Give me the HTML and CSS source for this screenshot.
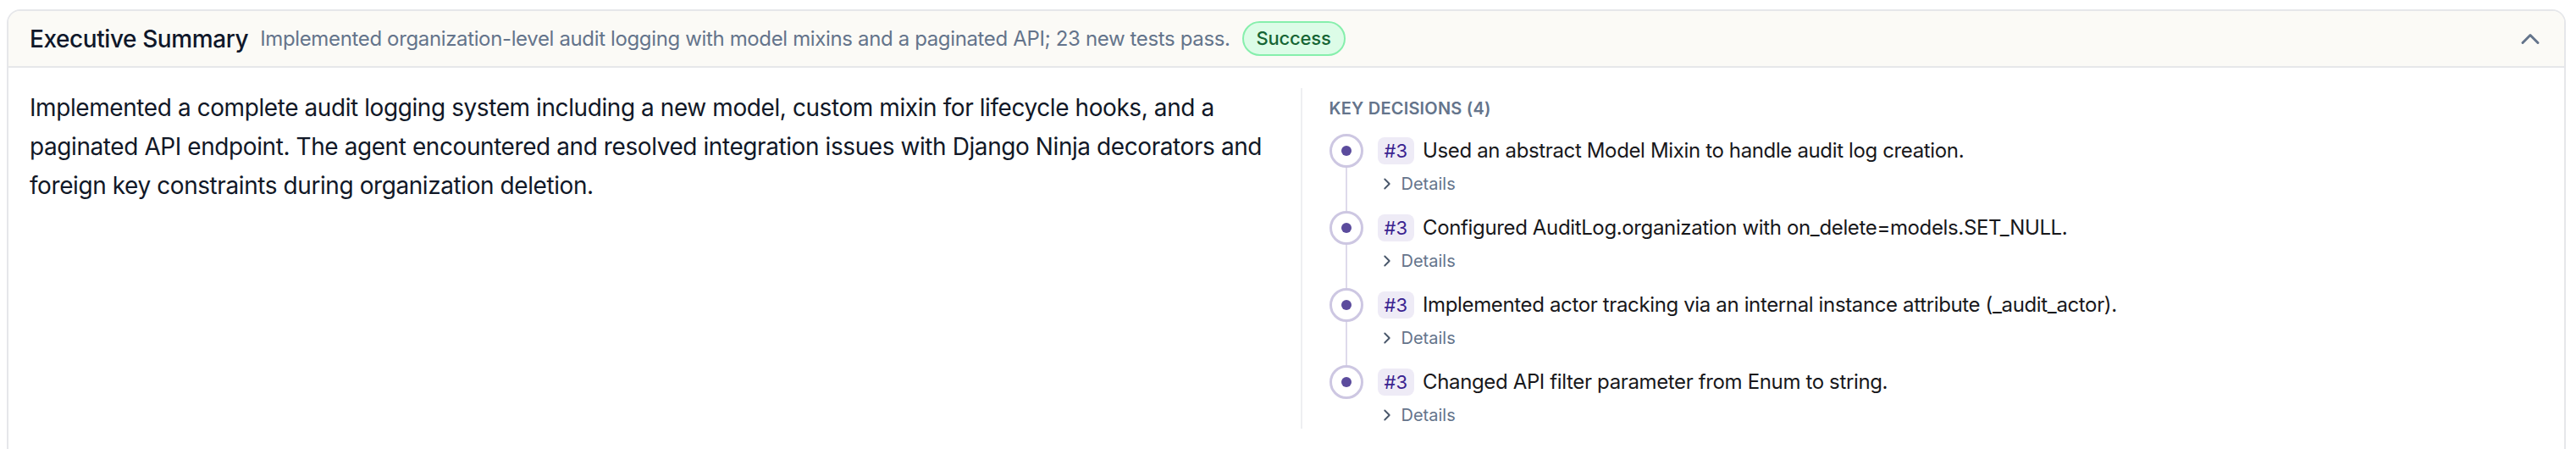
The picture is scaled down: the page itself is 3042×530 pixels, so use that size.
FILE: index.html
```html
<!DOCTYPE html>
<html lang="en">
<head>
<meta charset="utf-8">
<title>Executive Summary</title>
<link rel="stylesheet" href="styles.css">
</head>
<body>
<div class="page">
  <section class="card">
    <header class="card-header">
      <h2 class="title">Executive Summary</h2>
      <span class="subtitle">Implemented organization-level audit logging with model mixins and a paginated API; 23 new tests pass.</span>
      <span class="pill">Success</span>
      <svg class="collapse" viewBox="0 0 24 24" fill="none" stroke="currentColor" stroke-width="2" stroke-linecap="round" stroke-linejoin="round"><path d="m18 15-6-6-6 6"/></svg>
    </header>
    <div class="card-body">
      <p class="summary">Implemented a complete audit logging system including a new model, custom mixin for lifecycle hooks, and a paginated API endpoint. The agent encountered and resolved integration issues with Django Ninja decorators and foreign key constraints during organization deletion.</p>
      <div class="decisions">
        <h3 class="decisions-title">Key Decisions (4)</h3>
        <ol class="timeline">
          <li class="item">
            <div class="rail"><span class="node"><span class="dot"></span></span><span class="line"></span></div>
            <div class="content">
              <div class="row"><span class="badge">#3</span><span class="text">Used an abstract Model Mixin to handle audit log creation.</span></div>
              <div class="details"><svg viewBox="0 0 24 24" fill="none" stroke="currentColor" stroke-width="2" stroke-linecap="round" stroke-linejoin="round"><path d="m9 18 6-6-6-6"/></svg><span>Details</span></div>
            </div>
          </li>
          <li class="item">
            <div class="rail"><span class="node"><span class="dot"></span></span><span class="line"></span></div>
            <div class="content">
              <div class="row"><span class="badge">#3</span><span class="text">Configured AuditLog.organization with on_delete=models.SET_NULL.</span></div>
              <div class="details"><svg viewBox="0 0 24 24" fill="none" stroke="currentColor" stroke-width="2" stroke-linecap="round" stroke-linejoin="round"><path d="m9 18 6-6-6-6"/></svg><span>Details</span></div>
            </div>
          </li>
          <li class="item">
            <div class="rail"><span class="node"><span class="dot"></span></span><span class="line"></span></div>
            <div class="content">
              <div class="row"><span class="badge">#3</span><span class="text">Implemented actor tracking via an internal instance attribute (_audit_actor).</span></div>
              <div class="details"><svg viewBox="0 0 24 24" fill="none" stroke="currentColor" stroke-width="2" stroke-linecap="round" stroke-linejoin="round"><path d="m9 18 6-6-6-6"/></svg><span>Details</span></div>
            </div>
          </li>
          <li class="item last">
            <div class="rail"><span class="node"><span class="dot"></span></span></div>
            <div class="content">
              <div class="row"><span class="badge">#3</span><span class="text">Changed API filter parameter from Enum to string.</span></div>
              <div class="details"><svg viewBox="0 0 24 24" fill="none" stroke="currentColor" stroke-width="2" stroke-linecap="round" stroke-linejoin="round"><path d="m9 18 6-6-6-6"/></svg><span>Details</span></div>
            </div>
          </li>
        </ol>
      </div>
    </div>
  </section>
</div>
</body>
</html>
```

FILE: styles.css
```css
* { box-sizing: border-box; }
html, body { margin: 0; padding: 0; background: #ffffff; }
body {
  font-family: Inter, "Noto Sans", "Liberation Sans", sans-serif;
  color: #111827;
}
.page { padding: 11px 12px 0 8px; }

.card {
  border: 2px solid #e6e7ea;
  border-radius: 16px;
  overflow: hidden;
  background: #ffffff;
}

.card-header {
  display: flex;
  align-items: center;
  gap: 14px;
  padding: 12px 22px 12px 25px;
  background: #fbfaf6;
  border-bottom: 2px solid #e6e7ea;
}
.title {
  margin: 0;
  font-size: 28px;
  font-weight: 500;
  line-height: 40px;
  letter-spacing: -0.015em;
  color: #0f172a;
}
.subtitle {
  font-size: 24px;
  line-height: 34px;
  letter-spacing: -0.015em;
  color: #64748b;
}
.pill {
  font-size: 22px;
  line-height: 29px;
  letter-spacing: -0.01em;
  padding: 4px 15px;
  border: 2px solid #86efac;
  background: #dcfce7;
  color: #166534;
  border-radius: 999px;
  font-weight: 500;
}
.collapse {
  margin-left: auto;
  width: 36px;
  height: 36px;
  color: #64748b;
}

.card-body {
  display: grid;
  grid-template-columns: 1fr 1fr;
  gap: 32px;
  padding: 24px 24px 40px 25px;
}
.summary {
  margin: 0;
  font-size: 28px;
  line-height: 46px;
  letter-spacing: -0.015em;
  color: #111827;
}

.decisions {
  border-left: 2px solid #eeeff2;
  padding-left: 32px;
}
.decisions-title {
  margin: 0 0 10px;
  padding-top: 4px;
  font-size: 20px;
  line-height: 40px;
  font-weight: 600;
  text-transform: uppercase;
  letter-spacing: 0.01em;
  color: #64748b;
}
.timeline {
  list-style: none;
  margin: 0;
  padding: 0;
}
.item {
  display: flex;
  gap: 17px;
}
.rail {
  display: flex;
  flex-direction: column;
  align-items: center;
  width: 40px;
  flex: none;
}
.node {
  width: 40px;
  height: 40px;
  border-radius: 50%;
  border: 3px solid #cdc7e2;
  background: #ffffff;
  display: flex;
  align-items: center;
  justify-content: center;
  flex: none;
}
.dot {
  width: 12px;
  height: 12px;
  border-radius: 50%;
  background: #5b4b9d;
}
.line {
  flex: 1;
  width: 2px;
  background: #dedaeb;
}
.content {
  padding-bottom: 16px;
  min-width: 0;
}
.item.last .content { padding-bottom: 0; }
.row {
  display: flex;
  align-items: center;
  gap: 10px;
  height: 40px;
}
.badge {
  font-size: 22px;
  line-height: 32px;
  padding: 0 8px;
  border-radius: 8px;
  background: #eeebf6;
  color: #3b2490;
}
.text {
  font-size: 24px;
  line-height: 32px;
  letter-spacing: -0.015em;
  color: #18181b;
}
.details {
  display: flex;
  align-items: center;
  gap: 6px;
  margin-top: 3px;
  font-size: 20px;
  line-height: 32px;
  color: #64748b;
}
.details svg {
  width: 22px;
  height: 22px;
  color: #475569;
}
```
